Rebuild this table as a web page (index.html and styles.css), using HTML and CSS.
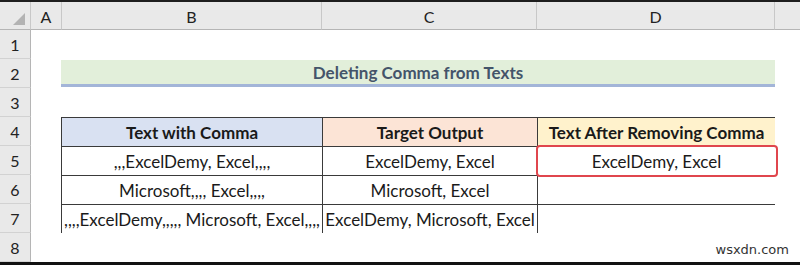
FILE: index.html
```html
<!DOCTYPE html>
<html>
<head>
<meta charset="utf-8">
<link rel="stylesheet" href="styles.css">
</head>
<body>
<div class="frame">
  <div class="sheet">
    <div class="corner"><span class="tri"></span></div>
    <div class="colhead">A</div>
    <div class="colhead">B</div>
    <div class="colhead">C</div>
    <div class="colhead">D</div>
    <div class="colhead rest"></div>

    <div class="rowhead">1</div>
    <div class="blank span5"></div>

    <div class="rowhead">2</div>
    <div class="blank"></div>
    <div class="title">Deleting Comma from Texts</div>
    <div class="blank"></div>

    <div class="rowhead">3</div>
    <div class="blank span5"></div>

    <div class="rowhead">4</div>
    <div class="blank r4"></div>
    <div class="tablewrap">
      <table class="data">
        <colgroup><col class="cb"><col class="cc"><col class="cd"></colgroup>
        <tr class="hdr">
          <th class="hb">Text with Comma</th>
          <th class="hc">Target Output</th>
          <th class="hd">Text After Removing Comma</th>
        </tr>
        <tr>
          <td>,,,ExcelDemy, Excel,,,,</td>
          <td>ExcelDemy, Excel</td>
          <td class="mark">ExcelDemy, Excel</td>
        </tr>
        <tr>
          <td>Microsoft,,,, Excel,,,,</td>
          <td>Microsoft, Excel</td>
          <td></td>
        </tr>
        <tr>
          <td>,,,,ExcelDemy,,,,, Microsoft, Excel,,,,</td>
          <td>ExcelDemy, Microsoft, Excel</td>
          <td></td>
        </tr>
      </table>
    </div>
    <div class="blank r4e"></div>
    <div class="rowhead">5</div>
    <div class="rowhead">6</div>
    <div class="rowhead">7</div>

    <div class="rowhead">8</div>
    <div class="blank span5"></div>
  </div>
  <div class="watermark">wsxdn.com</div>
</div>
</body>
</html>
```

FILE: styles.css
```css
* { box-sizing: border-box; }
html, body { margin: 0; padding: 0; background: #fff; }
body { width: 800px; height: 265px; overflow: hidden; font-family: "Lato", "Open Sans", sans-serif; }

.frame {
  position: relative;
  width: 800px;
  height: 265px;
  border-top: 2px solid #1e1e1e;
  border-bottom: 3px solid #111;
  overflow: hidden;
}

.sheet {
  display: grid;
  grid-template-columns: 31px 31px 260px 215px 238px 25px;
  grid-template-rows: 28px repeat(8, 29px);
}

.corner {
  background: #e9e9e9;
  border-right: 1px solid #c8c8c8;
  border-bottom: 1px solid #b5b5b5;
  position: relative;
}
.tri {
  position: absolute;
  right: 5px;
  bottom: 4px;
  width: 0; height: 0;
  border-left: 12px solid transparent;
  border-bottom: 12px solid #b3b3b3;
}

.colhead {
  background: #e9e9e9;
  border-right: 1px solid #c8c8c8;
  border-bottom: 1px solid #b5b5b5;
  display: flex;
  align-items: center;
  justify-content: center;
  font-size: 16px;
  color: #222;
  padding-top: 2px;
}
.colhead.rest { border-right: none; }

.rowhead {
  grid-column: 1;
  background: #e9e9e9;
  border-right: 1px solid #b5b5b5;
  border-bottom: 1px solid #d2d2d2;
  display: flex;
  align-items: center;
  justify-content: center;
  font-size: 16px;
  color: #222;
}

.blank { background: #fff; }
.span5 { grid-column: span 5; }

.title {
  grid-column: 3 / 6;
  background: #e2efda;
  border-bottom: 3px solid #a3b5d8;
  margin: 1px 0 1px -1px;
  display: flex;
  align-items: center;
  justify-content: center;
  font-weight: 700;
  font-size: 17px;
  color: #44546a;
}

.r4 { grid-row: 5 / 9; grid-column: 2; }
.r4e { grid-row: 5 / 9; grid-column: 6; }

.tablewrap {
  grid-column: 3 / 6;
  grid-row: 5 / 9;
  margin-left: -1px;
}

.data {
  border-collapse: collapse;
  table-layout: fixed;
  width: 714px;
  font-size: 17px;
  color: #1a1a1a;
}
.cb { width: 261px; }
.cc { width: 215px; }
.cd { width: 238px; }

.data th, .data td {
  border: 1px solid #3a3a3a;
  height: 29px;
  padding: 0;
  text-align: center;
  vertical-align: middle;
  white-space: nowrap;
  overflow: visible;
}
.data th { font-weight: 700; }
.hb { background: #d9e1f2; }
.hc { background: #fce4d6; }
.hd { background: #fff2cc; }

.mark { position: relative; }
.mark::after {
  content: "";
  position: absolute;
  left: -2px;
  top: -2px;
  right: -3px;
  bottom: -2px;
  border: 2px solid #e0464d;
  border-radius: 4px;
}

.watermark {
  position: absolute;
  right: 11px;
  bottom: 5px;
  font-family: "DejaVu Sans", sans-serif;
  font-size: 13px;
  color: #333;
  background: #fff;
}
```
